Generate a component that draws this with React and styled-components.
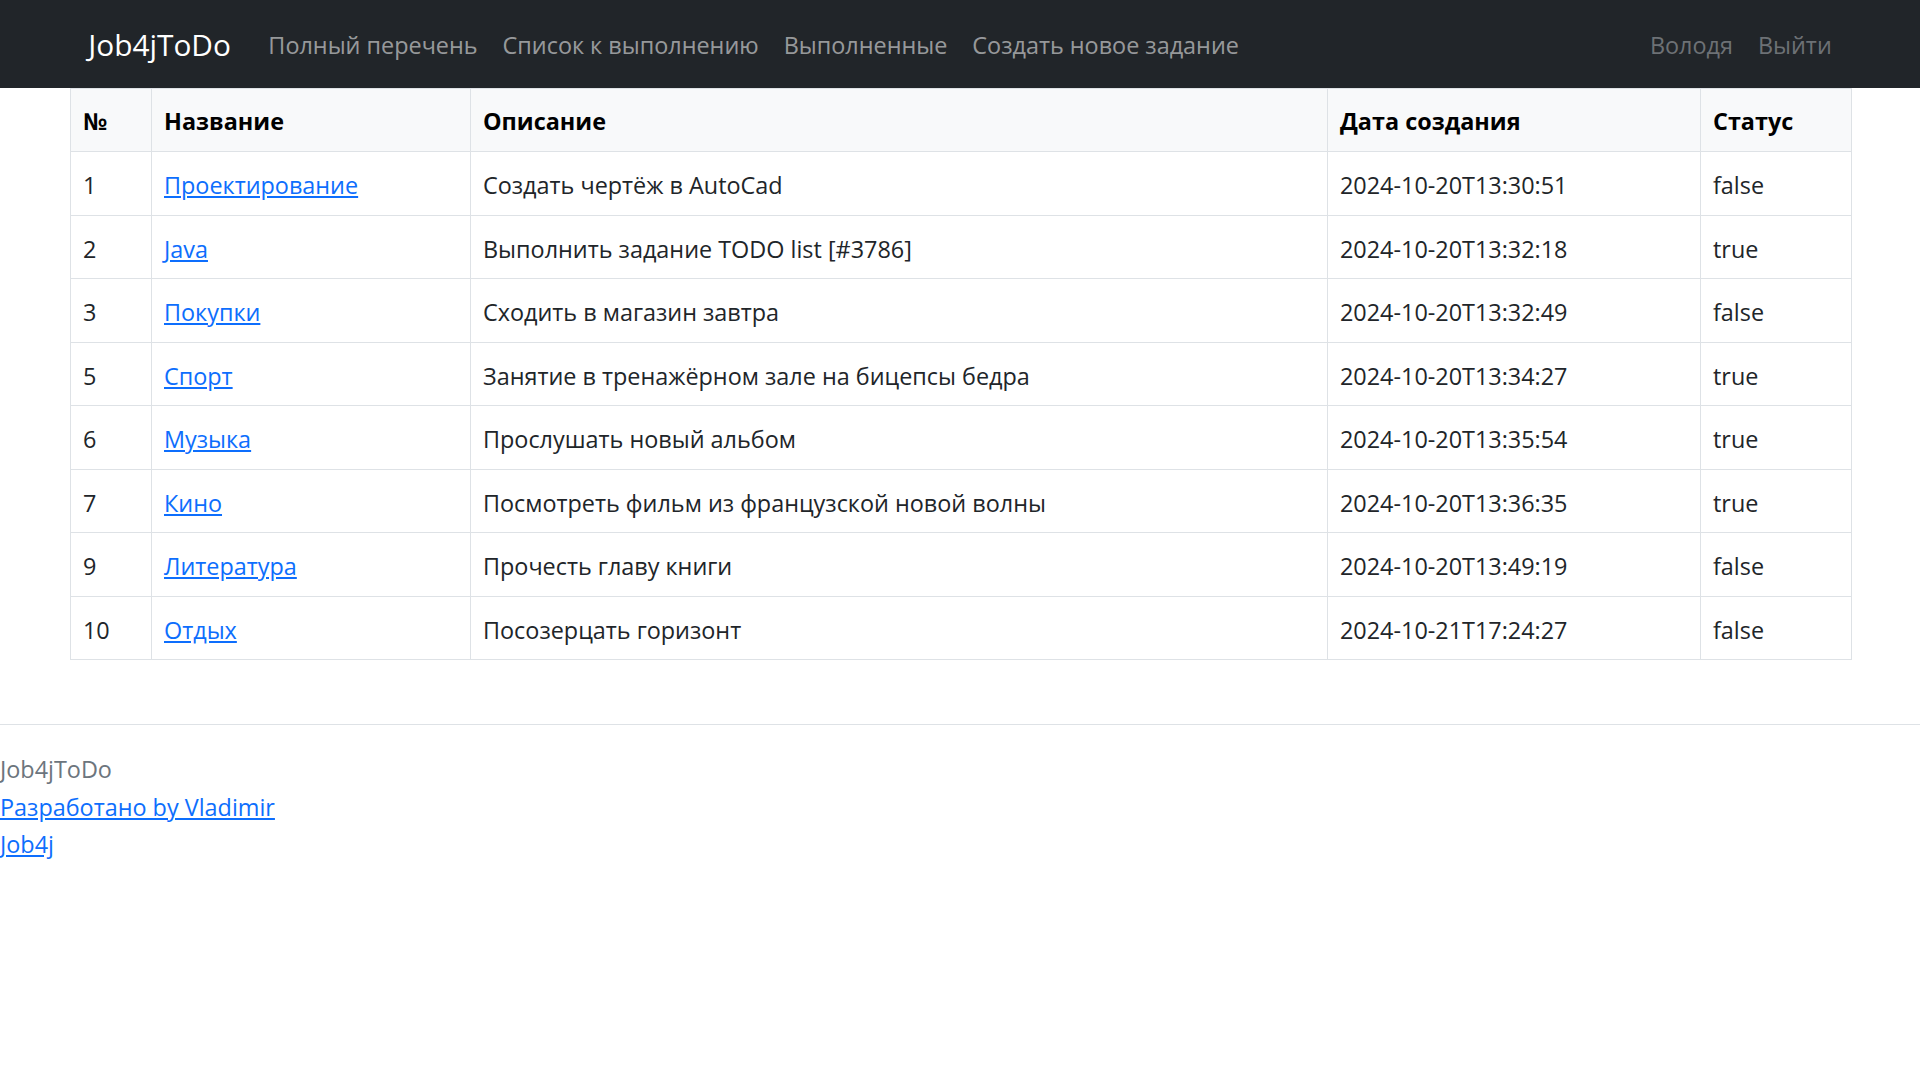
import React from "react";
import styled, { createGlobalStyle } from "styled-components";

const GlobalStyle = createGlobalStyle`
  * { box-sizing: border-box; }
  html, body { margin: 0; padding: 0; }
  body {
    font-family: "Open Sans", "Noto Sans", "Liberation Sans", sans-serif;
    font-size: 23.4px;
    line-height: 37.5px;
    color: #212529;
    background: #fff;
  }
`;

const Navbar = styled.nav`
  background: #212529;
  padding: 12.5px 0;
`;

const NavContainer = styled.div`
  max-width: 1781px;
  margin: 0 auto;
  padding: 0 18.75px;
  display: flex;
  align-items: center;
`;

const Brand = styled.a`
  font-size: 29.8px;
  line-height: 46.875px;
  padding: 9.3px 0 6.3px;
  margin-right: 25px;
  color: #fff;
  text-decoration: none;
  white-space: nowrap;
`;

const NavList = styled.div`
  display: flex;
  align-items: center;
`;

const NavLink = styled.a`
  padding: 14px 12.5px 11px;
  color: rgba(255, 255, 255, 0.55);
  text-decoration: none;
  white-space: nowrap;
`;

const UserNav = styled.div`
  margin-left: auto;
  display: flex;
  align-items: center;
  gap: 25px;
  padding-top: 3px;
`;

const UserLink = styled.a`
  color: #6d7175;
  text-decoration: none;
  white-space: nowrap;
`;

const Main = styled.main`
  max-width: 1781px;
  margin: 0 auto;
`;

const Table = styled.table`
  width: 100%;
  table-layout: fixed;
  border-collapse: collapse;
  border: 1px solid #dee2e6;
`;

const Th = styled.th`
  background: #f8f9fa;
  color: #000;
  font-weight: 700;
  text-align: left;
  padding: 14px 12.5px 11px;
  border: 1px solid #dee2e6;
  vertical-align: bottom;
  white-space: nowrap;
`;

const Td = styled.td`
  padding: 15px 12.5px 10px;
  border: 1px solid #dee2e6;
  color: #212529;
  white-space: nowrap;
`;

const TaskLink = styled.a`
  color: #0d6efd;
  text-decoration: underline;
`;

const Footer = styled.footer`
  margin-top: 64px;
  border-top: 1px solid #dee2e6;
  padding-top: 26px;
`;

const FooterLine = styled.div`
  color: ${(p) => (p.$muted ? "#6c757d" : "#212529")};
`;

const FooterLink = styled.a`
  color: #0d6efd;
  text-decoration: underline;
`;

const columns = [
  { title: "№", width: 81 },
  { title: "Название", width: 319 },
  { title: "Описание", width: 857 },
  { title: "Дата создания", width: 373 },
  { title: "Статус", width: 151 },
];

const tasks = [
  [1, "Проектирование", "Создать чертёж в AutoCad", "2024-10-20T13:30:51", "false"],
  [2, "Java", "Выполнить задание TODO list [#3786]", "2024-10-20T13:32:18", "true"],
  [3, "Покупки", "Сходить в магазин завтра", "2024-10-20T13:32:49", "false"],
  [5, "Спорт", "Занятие в тренажёрном зале на бицепсы бедра", "2024-10-20T13:34:27", "true"],
  [6, "Музыка", "Прослушать новый альбом", "2024-10-20T13:35:54", "true"],
  [7, "Кино", "Посмотреть фильм из французской новой волны", "2024-10-20T13:36:35", "true"],
  [9, "Литература", "Прочесть главу книги", "2024-10-20T13:49:19", "false"],
  [10, "Отдых", "Посозерцать горизонт", "2024-10-21T17:24:27", "false"],
];

export default function App() {
  return (
    <>
      <GlobalStyle />
      <Navbar>
        <NavContainer>
          <Brand href="#">Job4jToDo</Brand>
          <NavList>
            <NavLink href="#">Полный перечень</NavLink>
            <NavLink href="#">Список к выполнению</NavLink>
            <NavLink href="#">Выполненные</NavLink>
            <NavLink href="#">Создать новое задание</NavLink>
          </NavList>
          <UserNav>
            <UserLink href="#">Володя</UserLink>
            <UserLink href="#">Выйти</UserLink>
          </UserNav>
        </NavContainer>
      </Navbar>
      <Main>
        <Table>
          <colgroup>
            {columns.map((c) => (
              <col key={c.title} style={{ width: c.width }} />
            ))}
          </colgroup>
          <thead>
            <tr>
              {columns.map((c) => (
                <Th key={c.title}>{c.title}</Th>
              ))}
            </tr>
          </thead>
          <tbody>
            {tasks.map(([id, name, desc, date, done]) => (
              <tr key={id}>
                <Td>{id}</Td>
                <Td>
                  <TaskLink href="#">{name}</TaskLink>
                </Td>
                <Td>{desc}</Td>
                <Td>{date}</Td>
                <Td>{done}</Td>
              </tr>
            ))}
          </tbody>
        </Table>
      </Main>
      <Footer>
        <FooterLine $muted>Job4jToDo</FooterLine>
        <FooterLine>
          <FooterLink href="#">Разработано by Vladimir</FooterLink>
        </FooterLine>
        <FooterLine>
          <FooterLink href="#">Job4j</FooterLink>
        </FooterLine>
      </Footer>
    </>
  );
}
